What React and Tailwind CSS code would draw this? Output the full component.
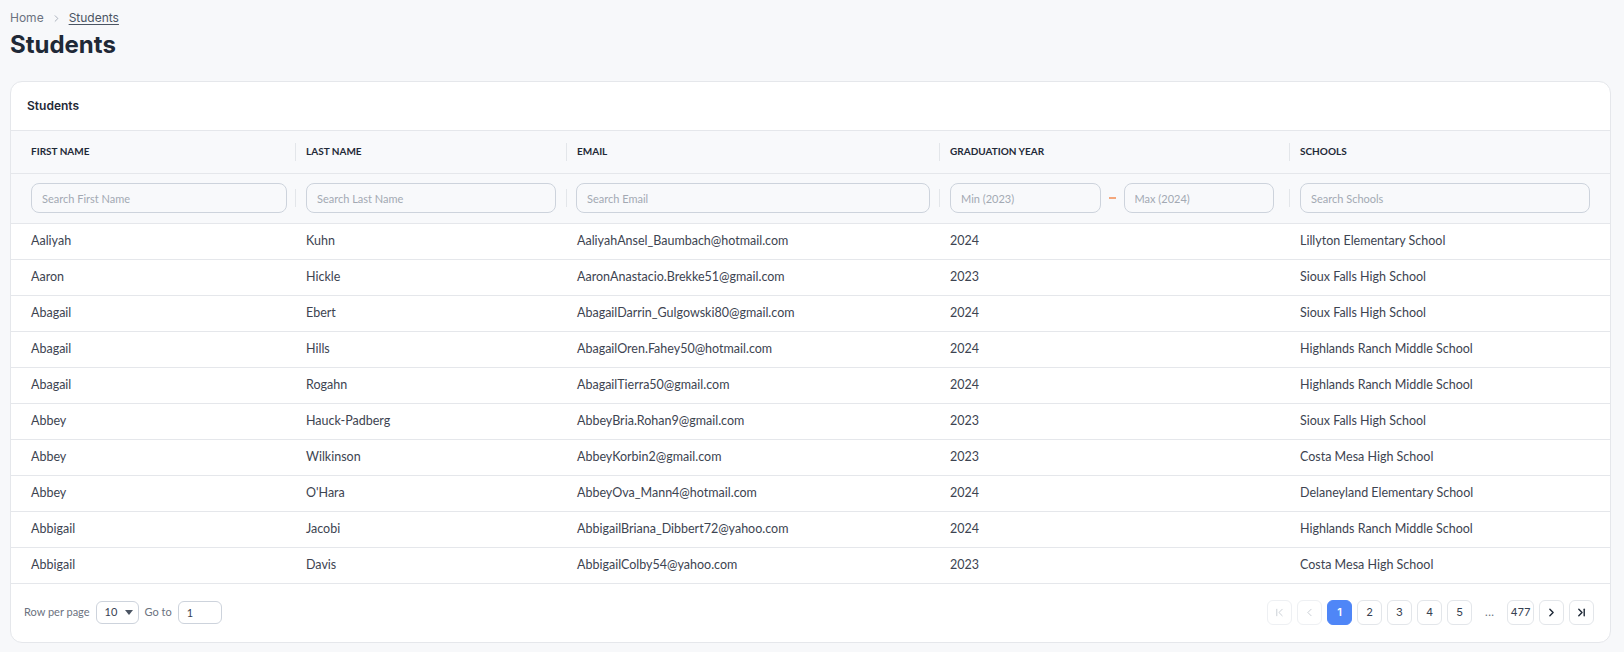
import { ChevronFirst, ChevronLast, ChevronLeft, ChevronRight } from "lucide-react";

const STUDENTS = [
  ["Aaliyah", "Kuhn", "AaliyahAnsel_Baumbach@hotmail.com", "2024", "Lillyton Elementary School"],
  ["Aaron", "Hickle", "AaronAnastacio.Brekke51@gmail.com", "2023", "Sioux Falls High School"],
  ["Abagail", "Ebert", "AbagailDarrin_Gulgowski80@gmail.com", "2024", "Sioux Falls High School"],
  ["Abagail", "Hills", "AbagailOren.Fahey50@hotmail.com", "2024", "Highlands Ranch Middle School"],
  ["Abagail", "Rogahn", "AbagailTierra50@gmail.com", "2024", "Highlands Ranch Middle School"],
  ["Abbey", "Hauck-Padberg", "AbbeyBria.Rohan9@gmail.com", "2023", "Sioux Falls High School"],
  ["Abbey", "Wilkinson", "AbbeyKorbin2@gmail.com", "2023", "Costa Mesa High School"],
  ["Abbey", "O'Hara", "AbbeyOva_Mann4@hotmail.com", "2024", "Delaneyland Elementary School"],
  ["Abbigail", "Jacobi", "AbbigailBriana_Dibbert72@yahoo.com", "2024", "Highlands Ranch Middle School"],
  ["Abbigail", "Davis", "AbbigailColby54@yahoo.com", "2023", "Costa Mesa High School"],
];

const COLUMNS = ["First Name", "Last Name", "Email", "Graduation Year", "Schools"];

const inputCls =
  "w-full h-[30px] rounded-lg border border-[#cdd3dc] bg-transparent px-[10px] text-[11px] text-[#374151] placeholder:text-[#a3a9b3] outline-none";

function Divider() {
  return <span className="absolute left-0 top-1/2 h-[18px] w-px -translate-y-1/2 bg-[#e3e6ea]" />;
}

function PageButton({ children, active, disabled, wide }) {
  return (
    <button
      type="button"
      className={`flex h-[25px] items-center justify-center rounded-md border font-['Inter',sans-serif] text-[11px] ${wide ? "w-[27px]" : "w-[25px]"} ${
        active
          ? "border-[#4f86f7] bg-[#4f86f7] font-semibold text-white"
          : disabled
            ? "border-[#eef0f3] text-[#c3c8d0]"
            : "border-[#e3e6ea] text-[#374151]"
      }`}
    >
      {children}
    </button>
  );
}

export default function App() {
  return (
    <div className="min-h-screen bg-[#f7f8fa] pl-[10px] pr-[13px] pt-[10px] pb-[11px] font-['Lato',sans-serif]">
      {/* Breadcrumb */}
      <nav className="flex h-4 items-center gap-[7px] font-['Inter',sans-serif] text-[12px] text-[#6b7280]">
        <span>Home</span>
        <ChevronRight size={11} strokeWidth={1.8} className="text-[#9ca3af]" />
        <span className="text-[#4b5563] underline underline-offset-2">Students</span>
      </nav>
      <h1 className="mt-[3px] font-['Inter',sans-serif] text-[24px] font-bold leading-8 text-[#1f2937]">Students</h1>

      {/* Card */}
      <div className="mt-[20px] overflow-hidden rounded-xl border border-[#e5e7eb] bg-white">
        <div className="flex h-[49px] items-center border-b border-[#e5e7eb] px-4 font-['Inter',sans-serif] text-[12px] font-semibold text-[#1f2937]">
          Students
        </div>

        <table className="w-full table-fixed border-collapse text-[12.5px] text-[#3d4451]">
          <colgroup>
            <col className="w-[284px]" />
            <col className="w-[271px]" />
            <col className="w-[373px]" />
            <col className="w-[350px]" />
            <col />
          </colgroup>
          <thead className="bg-[#f8f9fb]">
            <tr className="h-[42px] border-b border-[#e5e7eb]">
              {COLUMNS.map((c, i) => (
                <th
                  key={c}
                  className={`relative text-left text-[10px] font-bold uppercase text-[#1f2937] ${
                    i === 0 ? "pl-5 pr-[11px]" : "px-[11px]"
                  }`}
                >
                  {i > 0 && <Divider />}
                  {c}
                </th>
              ))}
            </tr>
            <tr className="h-[50px] border-b border-[#e5e7eb]">
              <th className="relative pl-5 pr-2 font-normal">
                <input className={inputCls} placeholder="Search First Name" />
              </th>
              <th className="relative pl-[11px] pr-[10px] font-normal">
                <Divider />
                <input className={inputCls} placeholder="Search Last Name" />
              </th>
              <th className="relative pl-[10px] pr-[9px] font-normal">
                <Divider />
                <input className={inputCls} placeholder="Search Email" />
              </th>
              <th className="relative pl-[11px] pr-[15px] font-normal">
                <Divider />
                <div className="flex items-center gap-[8px]">
                  <input className={inputCls} placeholder="Min (2023)" />
                  <span className="h-[1.5px] w-[7px] shrink-0 bg-[#f4a77c]" />
                  <input className={inputCls} placeholder="Max (2024)" />
                </div>
              </th>
              <th className="relative pl-[11px] pr-5 font-normal">
                <Divider />
                <input className={inputCls} placeholder="Search Schools" />
              </th>
            </tr>
          </thead>
          <tbody>
            {STUDENTS.map((row, r) => (
              <tr key={r} className="h-[36px] border-b border-[#e5e7eb]">
                {row.map((cell, i) => (
                  <td key={i} className={`truncate ${i === 0 ? "pl-5 pr-[11px]" : "px-[11px]"}`}>
                    {cell}
                  </td>
                ))}
              </tr>
            ))}
          </tbody>
        </table>

        {/* Footer */}
        <div className="flex h-[58px] items-center justify-between pl-[13px] pr-[16px] text-[11px] text-[#6b7280]">
          <div className="flex items-center gap-[6px]">
            <span>Row per page</span>
            <button
              type="button"
              className="flex h-[23px] w-[43px] items-center gap-[8px] rounded-md border border-[#cdd3dc] pl-[8px] text-[#374151]"
            >
              10
              <svg viewBox="0 0 10 6" className="h-[5px] w-[8px] fill-[#4b5563]">
                <path d="M0 0h10L5 6z" />
              </svg>
            </button>
            <span>Go to</span>
            <input
              className="h-[23px] w-[44px] rounded-md border border-[#cdd3dc] px-[8px] text-[11px] text-[#374151] outline-none"
              defaultValue="1"
            />
          </div>

          <div className="flex items-center gap-[5px]">
            <PageButton disabled>
              <ChevronFirst size={13} strokeWidth={1.6} />
            </PageButton>
            <PageButton disabled>
              <ChevronLeft size={13} strokeWidth={1.6} />
            </PageButton>
            <PageButton active>1</PageButton>
            <PageButton>2</PageButton>
            <PageButton>3</PageButton>
            <PageButton>4</PageButton>
            <PageButton>5</PageButton>
            <span className="flex w-[25px] items-center justify-center font-['Inter',sans-serif] text-[#6b7280]">...</span>
            <PageButton wide>477</PageButton>
            <PageButton>
              <ChevronRight size={13} strokeWidth={2.6} className="text-[#1f2937]" />
            </PageButton>
            <PageButton>
              <ChevronLast size={13} strokeWidth={2.6} className="text-[#1f2937]" />
            </PageButton>
          </div>
        </div>
      </div>
    </div>
  );
}
